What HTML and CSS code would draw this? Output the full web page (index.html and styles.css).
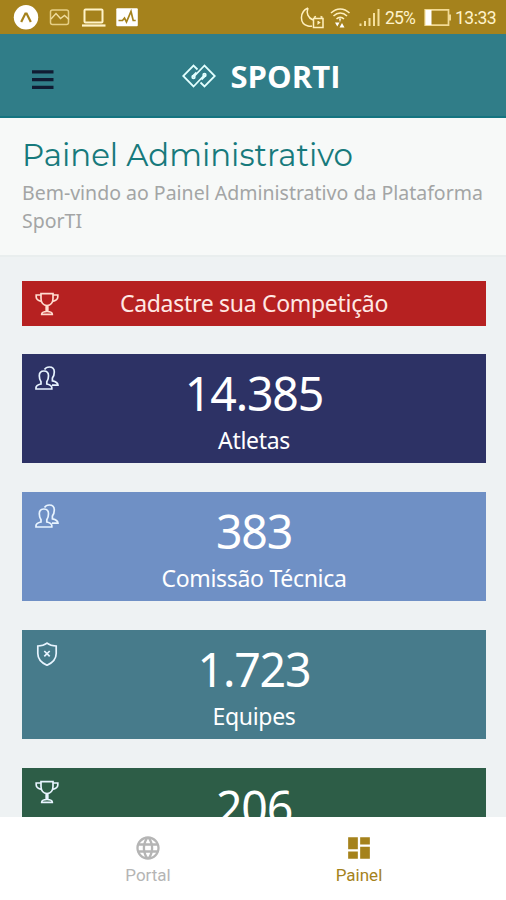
FILE: index.html
```
<!DOCTYPE html>
<html lang="pt-BR">
<head>
<meta charset="utf-8">
<title>SporTI</title>
<link rel="stylesheet" href="styles.css">
</head>
<body>
<svg class="defs" width="0" height="0">
  <symbol id="trophy" viewBox="0 0 24 24"><path d="M6 1.700h12v4.800c0 4-2.400 7-6 7s-6-3-6-7zM6 3H1.200v2c0 2 2.300 3.800 5.600 4.500M18 3h4.800v2c0 2-2.300 3.800-5.600 4.500M11.200 13.500v6h1.600v-6M6.700 22.300c0-1.800 2-2.800 5.300-2.800s5.300 1 5.300 2.800z"/></symbol>
  <symbol id="users" viewBox="0 0 24 24"><path d="M1 23v-1.500c0-2 1.600-2.700 5-3.500v-2.200C4.800 14 4.300 12 4.300 9.700 4.300 6.700 6 5 8.900 5s4.600 1.700 4.600 4.700c0 2.300-.5 4.300-1.700 6.100V18c3.400.8 5 1.500 5 3.500V23zM9.500 3.500C10.500 1.800 12 1 14.300 1 17.500 1 19.300 3 19.300 6c0 2.400-.6 4.300-1.900 6v2.800c3.700.8 5.600 1.800 5.600 4.400H17"/></symbol>
  <symbol id="shield" viewBox="0 0 24 24"><path d="M12 1.200c2.500 2 5.500 2.800 9.200 2.800v7.500c0 5.500-3 9-9.200 11.800-6.200-2.800-9.200-6.300-9.200-11.800V4C6.500 4 9.500 3.200 12 1.200zM9.300 9l5.400 5.400M14.700 9l-5.400 5.400"/></symbol>
</svg>
<div class="screen">
  <div class="status">
    <svg width="140" height="34" viewBox="0 0 140 34" fill="none" stroke="#fff3c8">
      <circle cx="26" cy="17.300" r="12.200" fill="#fff" stroke="none"/>
      <path d="M21.200 22l4.200-8.500h1.200l4.200 8.500" stroke="#a5821c" stroke-width="2.200"/>
      <rect x="50.500" y="10" width="18" height="14.500" rx="2" stroke="#e6cf85" stroke-width="1.500"/>
      <path d="M51 19l5-5.500 4.500 5 4-3 4.500 4" stroke="#f0dda0" stroke-width="1.400"/>
      <rect x="84.500" y="9.500" width="18" height="13" rx="1" stroke-width="2"/>
      <path d="M82 25.500h23.500" stroke-width="2.200"/>
      <rect x="116.300" y="8.300" width="21.500" height="18" rx="1" fill="#fff" stroke="none"/>
      <path d="M118.500 20.500h4l2-2.500 2 4 4.500-10.500 2.200 9h2.500" stroke="#a5821c" stroke-width="1.700"/>
    </svg>
    <div class="status-right">
      <svg width="82" height="34" viewBox="0 0 82 34" fill="none" stroke="#fff0be" stroke-width="1.500">
        <path d="M8 8C-1 12-.5 24 8 26c1.500.4 3 .4 4 0M8 8c-2 5 0 10 5 12"/>
        <rect x="13.500" y="18.500" width="9.500" height="9"/><path d="M14 17.500l2-1M22.500 17.500l-2-1M18.200 21v2.500l2-1.500"/>
        <path d="M31 13c5.500-5.500 13-5.500 18.500 0M33.500 16c4-4 9.500-4 13.500 0M36.500 19c2.200-2.200 5.300-2.200 7.500 0"/>
        <path d="M35 22.500h4.500l-2.200 4zM39.500 27.500h5l-2.500-4.500zM41 18.500h-2l1 4z" fill="#fff" stroke="none"/>
        <path d="M60.500 26v-2.500M65 26v-5M69.500 26v-8M74 26V13M78.500 26V9" stroke="#f5df9c" stroke-width="2"/>
      </svg>
      <span class="pct">25%</span>
      <svg class="battery" width="28" height="34" viewBox="0 0 28 34"><path d="M1.200 9.900h23.300v15.200H1.200z" fill="none" stroke="#f2da94" stroke-width="1.700"/><path d="M1.500 10h6v15h-6z" fill="#fff"/><path d="M25 14.500h2v6h-2z" fill="#f2da94"/></svg>
      <span class="clock">13:33</span>
    </div>
  </div>
  <header class="header">
    <svg class="menu" width="22" height="20" viewBox="0 0 22 20"><path d="M0 1.800h21.500M0 9.600h21.500M0 17.400h21.500" stroke="#101c33" stroke-width="3.200"/></svg>
    <div class="brand">
      <svg width="34" height="24" viewBox="0 0 34 24" fill="none" stroke="#e2ffff" stroke-width="1.800"><path d="M15.500 5.500L11.500 1.500 1.200 12l10.300 10.500L22.500 11M18.500 18.500l4 4L32.800 12 22.500 1.500 11.500 13"/><path d="M14.500 8.500l-4 4M19.500 15.500l4-4"/><circle cx="11.500" cy="13" r="1.300"/><circle cx="22.500" cy="11" r="1.300"/></svg>
      <span>SPORTI</span>
    </div>
  </header>
  <section class="intro">
    <h1>Painel Administrativo</h1>
    <p>Bem-vindo ao Painel Administrativo da Plataforma SporTI</p>
  </section>
  <main class="cards">
    <div class="card cta"><svg class="icon"><use href="#trophy"/></svg><span class="label">Cadastre sua Competição</span></div>
    <div class="card navy"><svg class="icon"><use href="#users"/></svg><strong>14.385</strong><span class="label">Atletas</span></div>
    <div class="card blue"><svg class="icon"><use href="#users"/></svg><strong>383</strong><span class="label">Comissão Técnica</span></div>
    <div class="card teal"><svg class="icon"><use href="#shield"/></svg><strong>1.723</strong><span class="label">Equipes</span></div>
    <div class="card green"><svg class="icon"><use href="#trophy"/></svg><strong>206</strong></div>
  </main>
  <nav class="tabs">
    <a class="tab"><svg width="28" height="28" viewBox="0 0 24 24"><path fill="currentColor" d="M11.990 2C6.470 2 2 6.480 2 12s4.470 10 9.990 10C17.520 22 22 17.520 22 12S17.520 2 11.990 2zm6.930 6h-2.950c-.32-1.250-.78-2.450-1.380-3.560 1.840.63 3.370 1.910 4.330 3.560zM12 4.040c.83 1.200 1.480 2.530 1.910 3.960h-3.820c.43-1.430 1.080-2.760 1.910-3.960zM4.260 14C4.100 13.360 4 12.690 4 12s.1-1.360.26-2h3.380c-.08.66-.14 1.320-.14 2s.06 1.340.14 2H4.260zm.82 2h2.950c.32 1.250.78 2.450 1.380 3.560-1.840-.63-3.370-1.900-4.330-3.560zm2.950-8H5.080c.96-1.660 2.490-2.930 4.330-3.560C8.810 5.550 8.350 6.750 8.030 8zM12 19.960c-.83-1.200-1.480-2.530-1.910-3.960h3.820c-.43 1.430-1.080 2.760-1.910 3.960zM14.340 14H9.660c-.09-.66-.16-1.320-.16-2s.07-1.350.16-2h4.680c.09.650.16 1.320.16 2s-.07 1.340-.16 2zm.25 5.560c.6-1.110 1.060-2.310 1.380-3.560h2.950c-.96 1.650-2.490 2.930-4.330 3.560zM16.360 14c.08-.66.14-1.320.14-2s-.06-1.340-.14-2h3.380c.16.640.26 1.310.26 2s-.1 1.360-.26 2h-3.380z"/></svg><span>Portal</span></a>
    <a class="tab active"><svg width="28" height="28" viewBox="0 0 24 24"><path fill="currentColor" d="M2.700 2.700h8.300v10.300H2.700zM2.700 15h8.300v6.300H2.700zM13 11h8.300v10.300H13zM13 2.700h8.300V9H13z"/></svg><span>Painel</span></a>
  </nav>
</div>
</body>
</html>
```
FILE: styles.css
```
* { box-sizing: border-box; }
body { margin: 0; font-family: "Noto Sans", "Open Sans", sans-serif; background: #eef2f3; }
.defs { position: absolute; }
.screen { width: 506px; height: 900px; display: flex; flex-direction: column; overflow: hidden; }
.status { height: 34px; flex: none; background: #a5821c; display: flex; justify-content: space-between; }
.status svg { display: block; flex: none; }
.status-right { display: flex; width: 206px; color: #fff3cb; font: 400 17.500px/36px Roboto, sans-serif; }
.pct { width: 38px; margin-left: 3px; letter-spacing: -.8px; }
.battery { margin-left: 1px; }
.clock { margin-left: 3px; white-space: nowrap; letter-spacing: -.5px; }
.header { height: 84px; flex: none; background: #307d88; border-bottom: 2px solid #147480; display: grid; grid-template-columns: 84px 1fr 84px; align-items: center; }
.menu { margin: 10px 0 0 32px; }
.brand { display: flex; align-items: center; justify-content: center; gap: 15px; margin: 2px 0 0 16px; color: #fff; font: 700 31px/40px "Open Sans", sans-serif; }
.intro { height: 139px; flex: none; background: #f7f9f8; border-bottom: 2px solid #e9eeee; padding: 18px 20px 0 22px; }
h1 { margin: 0; height: 40px; font: 400 30.900px/38px Montserrat, Inter, sans-serif; color: #177a7c; white-space: nowrap; }
p { margin: 3px 0 0; font: 19.500px/28px "Noto Sans", sans-serif; color: #a3a5a5; }
.cards { flex: 1; min-height: 0; overflow: hidden; padding: 23.700px 20px 0 22px; display: flex; flex-direction: column; gap: 28.500px; }
.card { flex: none; height: 109.300px; position: relative; color: #fff; display: flex; flex-direction: column; align-items: center; }
.cta { height: 45px; background: #b62121; justify-content: center; }
.navy { background: #2d3265; }
.blue { background: #6f90c5; }
.teal { background: #477b8b; }
.green { background: #2d5d47; }
.icon { position: absolute; left: 13px; top: 12px; width: 24px; height: 24px; fill: none; stroke: #e8f4ff; stroke-width: 1.700; }
.cta .icon { stroke: #ffdcd0; top: 11px; }
strong { font: 400 46.500px/56px "Noto Sans", sans-serif; letter-spacing: -1.200px; margin-top: 11px; }
.label { font-size: 23px; line-height: 32px; letter-spacing: -.3px; margin-top: 3px; }
.cta .label { margin-top: -1px; color: #ffe8e4; }
.tabs { height: 83px; flex: none; background: #fff; display: flex; justify-content: center; padding: 17px 0 0 1px; }
.tab { width: 211px; display: flex; flex-direction: column; align-items: center; color: #b5b5b5; font: 17px/26px Roboto, sans-serif; }
.tab svg { display: block; }
.active { color: #a5821c; }
```
